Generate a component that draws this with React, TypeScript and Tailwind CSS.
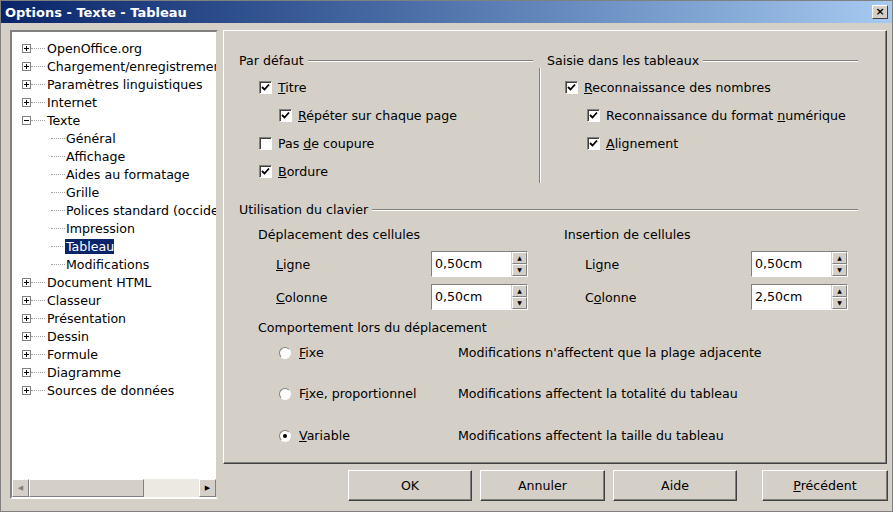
import React from 'react';

const font = { fontFamily: '"DejaVu Sans", Verdana, sans-serif' };

const U = ({ t, i }: { t: string; i: number }) => (
  <span className="whitespace-nowrap">
    {t.slice(0, i)}
    <span className="underline">{t[i]}</span>
    {t.slice(i + 1)}
  </span>
);

const Check = ({ on }: { on?: boolean }) => (
  <span className="w-[13px] h-[13px] bg-white border-t border-l border-t-[#808080] border-l-[#808080] border-b border-r border-b-white border-r-white shadow-[inset_1px_1px_0_#404040] flex items-center justify-center shrink-0">
    {on && (
      <svg width="9" height="9" viewBox="0 0 9 9">
        <path d="M1 4 L3.5 6.5 L8 1.5" stroke="#000" strokeWidth="1.8" fill="none" />
      </svg>
    )}
  </span>
);

const Radio = ({ on }: { on?: boolean }) => (
  <span className="w-[12px] h-[12px] rounded-full bg-white border border-t-[#808080] border-l-[#808080] border-b-white border-r-white flex items-center justify-center shrink-0">
    {on && <span className="w-[4px] h-[4px] rounded-full bg-black" />}
  </span>
);

const Spin = ({ v }: { v: string }) => (
  <div className="flex w-[97px] h-[26px] border border-t-[#808080] border-l-[#808080] border-b-white border-r-white bg-white">
    <span className="flex-1 pl-[3px] leading-[24px]">{v}</span>
    <div className="w-[16px] flex flex-col border-l border-[#d4d0c8]">
      <span className="flex-1 bg-[#d4d0c8] border border-t-white border-l-white border-b-[#808080] border-r-[#808080] text-[6px] leading-[9px] text-center">▲</span>
      <span className="flex-1 bg-[#d4d0c8] border border-t-white border-l-white border-b-[#808080] border-r-[#808080] text-[6px] leading-[9px] text-center">▼</span>
    </div>
  </div>
);

const Plus = ({ minus }: { minus?: boolean }) => (
  <span className="w-[9px] h-[9px] border border-[#808080] bg-white flex items-center justify-center shrink-0">
    <svg width="7" height="7" viewBox="0 0 7 7">
      <path d={minus ? 'M1 3.5H6' : 'M1 3.5H6M3.5 1V6'} stroke="#000" strokeWidth="1" />
    </svg>
  </span>
);

const Group = ({ title, w }: { title: string; w: string }) => (
  <div className={`flex items-center gap-[4px] ${w}`}>
    <span className="whitespace-nowrap">{title}</span>
    <span className="flex-1 h-[2px] border-t border-[#808080] border-b border-b-white" />
  </div>
);

const Btn = ({ children, w }: { children: React.ReactNode; w: string }) => (
  <div className={`${w} h-[31px] flex items-center justify-center bg-[#d4d0c8] border border-t-white border-l-white border-b-[#404040] border-r-[#404040] shadow-[inset_-1px_-1px_0_#808080]`}>
    {children}
  </div>
);

const top = ['OpenOffice.org', 'Chargement/enregistrement', 'Paramètres linguistiques', 'Internet'];
const subs = ['Général', 'Affichage', 'Aides au formatage', 'Grille', 'Polices standard (occidentales)', 'Impression', 'Tableau', 'Modifications'];
const after = ['Document HTML', 'Classeur', 'Présentation', 'Dessin', 'Formule', 'Diagramme', 'Sources de données'];

const Line = () => <span className="w-[14px] shrink-0 border-t border-dotted border-[#a0a0a0]" />;

export default function App() {
  return (
    <div className="w-[893px] h-[512px] bg-[#d4d0c8] text-[12.6px] leading-[15px] text-black overflow-hidden border border-[#808080]" style={font}>
      <div className="h-[22px] flex items-center justify-between px-[4px] bg-gradient-to-r from-[#0a246a] to-[#a6caf0]">
        <span className="text-white font-bold text-[13px]">Options - Texte - Tableau</span>
        <span className="w-[16px] h-[14px] bg-[#d4d0c8] border border-t-white border-l-white border-b-[#404040] border-r-[#404040] text-[11px] font-bold leading-[12px] text-center">×</span>
      </div>
      <div className="flex gap-[5px] px-[9px] pt-[7px]">
        <div className="w-[208px] h-[469px] bg-white border-2 border-t-[#808080] border-l-[#808080] border-b-white border-r-[#d4d0c8] flex flex-col">
          <div className="flex-1 overflow-hidden pt-[7px] pl-[10px]">
            {top.map((t) => (
              <div key={t} className="h-[18px] flex items-center whitespace-nowrap">
                <Plus /><Line /><span className="pl-[2px] shrink-0">{t}</span>
              </div>
            ))}
            <div className="h-[18px] flex items-center"><Plus minus /><Line /><span className="pl-[2px]">Texte</span></div>
            {subs.map((t) => (
              <div key={t} className="h-[18px] flex items-center whitespace-nowrap pl-[29px]">
                <Line />
                <span className={`pl-[1px] shrink-0 ${t === 'Tableau' ? 'bg-[#0a246a] text-white outline-dotted outline-1' : ''}`}>{t}</span>
              </div>
            ))}
            {after.map((t) => (
              <div key={t} className="h-[18px] flex items-center whitespace-nowrap">
                <Plus /><Line /><span className="pl-[2px] shrink-0">{t}</span>
              </div>
            ))}
          </div>
          <div className="h-[18px] flex bg-[#ece9e2]">
            <span className="w-[17px] bg-[#d4d0c8] border border-t-white border-l-white border-b-[#808080] border-r-[#808080] text-[7px] text-[#808080] flex items-center justify-center">◀</span>
            <span className="w-[115px] bg-[#d4d0c8] border border-t-white border-l-white border-b-[#808080] border-r-[#808080]" />
            <span className="flex-1" />
            <span className="w-[17px] bg-[#d4d0c8] border border-t-white border-l-white border-b-[#808080] border-r-[#808080] text-[7px] flex items-center justify-center">▶</span>
          </div>
        </div>
        <div className="flex flex-col gap-[6px]">
          <div className="w-[664px] h-[434px] border border-t-white border-l-white border-b-[#404040] border-r-[#404040] shadow-[inset_-1px_-1px_0_#808080] pl-[15px] pr-[28px] pt-[22px]">
            <div className="flex">
              <div className="w-[294px] flex flex-col">
                <Group title="Par défaut" w="w-[294px]" />
                <div className="flex items-center gap-[6px] pl-[20px] mt-[12px]"><Check on /><U t="Titre" i={0} /></div>
                <div className="flex items-center gap-[6px] pl-[40px] mt-[13px]"><Check on /><U t="Répéter sur chaque page" i={0} /></div>
                <div className="flex items-center gap-[6px] pl-[20px] mt-[13px]"><Check /><U t="Pas de coupure" i={4} /></div>
                <div className="flex items-center gap-[6px] pl-[20px] mt-[13px]"><Check on /><U t="Bordure" i={0} /></div>
              </div>
              <div className="w-[2px] h-[115px] mt-[15px] mx-[6px] border-l border-[#808080] border-r border-r-white" />
              <div className="flex-1 flex flex-col">
                <Group title="Saisie dans les tableaux" w="w-full" />
                <div className="flex items-center gap-[6px] pl-[18px] mt-[12px]"><Check on /><U t="Reconnaissance des nombres" i={0} /></div>
                <div className="flex items-center gap-[6px] pl-[40px] mt-[13px]"><Check on /><span className="whitespace-nowrap">Reconnaissance du format <span className="underline">n</span>umérique</span></div>
                <div className="flex items-center gap-[6px] pl-[40px] mt-[13px]"><Check on /><U t="Alignement" i={0} /></div>
              </div>
            </div>
            <div className="mt-[19px]"><Group title="Utilisation du clavier" w="w-full" /></div>
            <div className="flex mt-[10px] pl-[19px]">
              <div className="w-[306px]">
                <div>Déplacement des cellules</div>
                <div className="flex items-center mt-[9px] pl-[18px]"><span className="w-[155px]"><U t="Ligne" i={0} /></span><Spin v="0,50cm" /></div>
                <div className="flex items-center mt-[7px] pl-[18px]"><span className="w-[155px]"><U t="Colonne" i={0} /></span><Spin v="0,50cm" /></div>
              </div>
              <div>
                <div>Insertion de cellules</div>
                <div className="flex items-center mt-[9px] pl-[21px]"><span className="w-[166px]"><U t="Ligne" i={2} /></span><Spin v="0,50cm" /></div>
                <div className="flex items-center mt-[7px] pl-[21px]"><span className="w-[166px]"><U t="Colonne" i={1} /></span><Spin v="2,50cm" /></div>
              </div>
            </div>
            <div className="pl-[19px] mt-[10px]">Comportement lors du déplacement</div>
            {[
              ['Fixe', 0, "Modifications n'affectent que la plage adjacente", false, 'mt-[10px]'],
              ['Fixe, proportionnel', 1, 'Modifications affectent la totalité du tableau', false, 'mt-[26px]'],
              ['Variable', 0, 'Modifications affectent la taille du tableau', true, 'mt-[27px]'],
            ].map(([l, i, d, on, m]) => (
              <div key={l as string} className={`flex items-center pl-[40px] ${m}`}>
                <span className="w-[179px] flex items-center gap-[8px]"><Radio on={on as boolean} /><U t={l as string} i={i as number} /></span>
                <span>{d as string}</span>
              </div>
            ))}
          </div>
          <div className="flex pl-[125px] gap-[8px]">
            <Btn w="w-[124px]">OK</Btn>
            <Btn w="w-[125px]">Annuler</Btn>
            <Btn w="w-[124px]"><span>Aide</span></Btn>
            <span className="w-[9px]" />
            <Btn w="w-[126px]"><U t="Précédent" i={0} /></Btn>
          </div>
        </div>
      </div>
    </div>
  );
}
